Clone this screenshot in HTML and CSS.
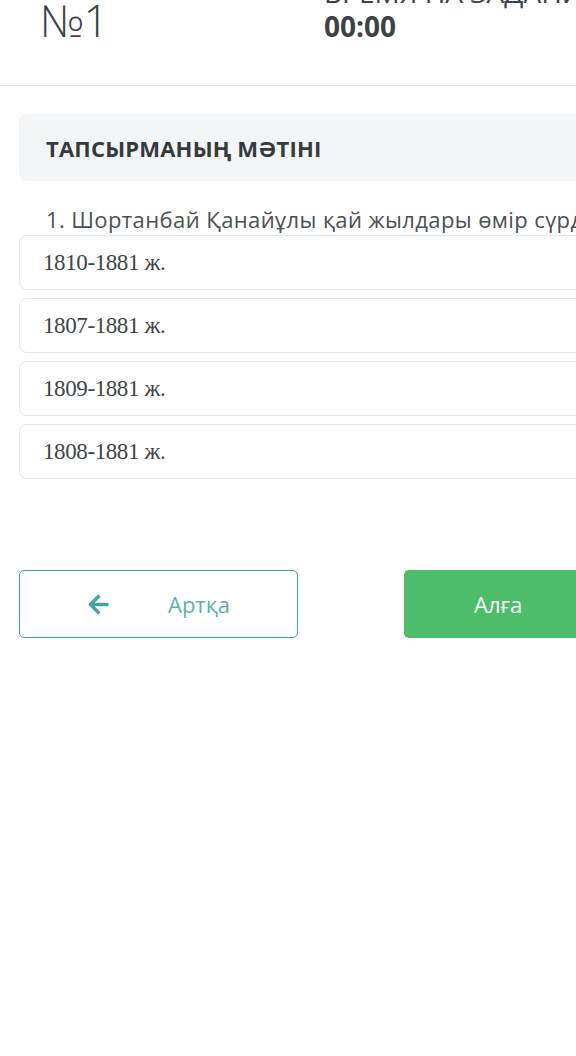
FILE: index.html
```html
<!DOCTYPE html>
<html lang="kk">
<head>
    <meta charset="UTF-8">
    <meta name="viewport" content="width=device-width, initial-scale=1.0">
    <title>Тапсырма</title>
    <link rel="stylesheet" href="styles.css">
</head>
<body>
    <div class="page">
        <!-- тапсырма нөмірі және уақыт -->
        <div class="top">
            <div class="task-num">№1</div>
            <div class="timer">
                <div class="timer-label">ВРЕМЯ НА ЗАДАНИЕ</div>
                <div class="timer-value">00:00</div>
            </div>
        </div>

        <div class="content">
            <div class="section-title">ТАПСЫРМАНЫҢ МӘТІНІ</div>
            <div class="question">1. Шортанбай Қанайұлы қай жылдары өмір сүрді?</div>

            <div class="answers">
                <div class="answer">1810-1881 ж.</div>
                <div class="answer">1807-1881 ж.</div>
                <div class="answer">1809-1881 ж.</div>
                <div class="answer">1808-1881 ж.</div>
            </div>

            <div class="nav">
                <button class="btn btn-back">
                    <svg class="arrow" viewBox="0 0 448 512" width="23" height="23">
                        <path fill="currentColor" d="M257.5 445.1l-22.2 22.2c-9.4 9.4-24.6 9.4-33.9 0L7 273c-9.4-9.4-9.4-24.6 0-33.9L201.4 44.7c9.4-9.4 24.6-9.4 33.9 0l22.2 22.2c9.5 9.5 9.3 25-.4 34.3L136.6 216H424c13.3 0 24 10.7 24 24v32c0 13.3-10.7 24-24 24H136.6l120.5 114.8c9.8 9.3 10 24.8.4 34.3z"/>
                    </svg>
                    <span>Артқа</span>
                </button>
                <button class="btn btn-next">
                    <span>Алға</span>
                    <svg class="arrow" viewBox="0 0 448 512" width="23" height="23">
                        <path fill="currentColor" d="M190.5 66.9l22.2-22.2c9.4-9.4 24.6-9.4 33.9 0L441 239c9.4 9.4 9.4 24.6 0 33.9L246.6 467.3c-9.4 9.4-24.6 9.4-33.9 0l-22.2-22.2c-9.5-9.5-9.3-25 .4-34.3L311.4 296H24c-13.3 0-24-10.7-24-24v-32c0-13.3 10.7-24 24-24h287.4L190.9 101.2c-9.8-9.3-10-24.8-.4-34.3z"/>
                    </svg>
                </button>
            </div>
        </div>
    </div>
</body>
</html>
```

FILE: styles.css
```css
/* страница шире экрана, правая часть обрезана */
body {
    margin: 0;
    background: #fff;
    font-family: "Open Sans", Arial, sans-serif;
    color: #3a4046;
    overflow-x: hidden;
}

.page {
    width: 780px;
}

/* шапка */
.top {
    display: flex;
    align-items: flex-start;
    height: 85px;
    border-bottom: 1px solid #e6e9eb;
    padding-left: 40px;
}

.task-num {
    font-size: 44px;
    font-weight: 300;
    line-height: 1;
    margin-top: -2px;
    letter-spacing: -1px;
    color: #3c4248;
    width: 284px;
}

.timer {
    margin-top: -24px;
}

.timer-label {
    font-size: 28px;
    line-height: 32px;
    color: #3c4248;
    white-space: nowrap;
}

.timer-value {
    font-size: 28px;
    font-weight: 700;
    line-height: 36px;
    color: #3c4248;
}

.content {
    padding: 28px 0 0 19px;
}

/* заголовок раздела */
.section-title {
    background: #f3f5f7;
    border-radius: 8px;
    height: 67px;
    display: flex;
    align-items: center;
    padding-left: 27px;
    font-size: 22px;
    font-weight: 700;
    letter-spacing: 0.2px;
    color: #343a40;
}

.question {
    margin: 23px 0 0 27px;
    font-size: 22px;
    letter-spacing: 0.4px;
    line-height: 30px;
    color: #4a5056;
    white-space: nowrap;
}

.answers {
    display: flex;
    flex-direction: column;
    gap: 8px;
    margin-top: 1px;
}

.answer {
    height: 53px;
    border: 1px solid #e2e7ea;
    border-radius: 8px;
    display: flex;
    align-items: center;
    padding-left: 23px;
    font-family: "Liberation Serif", "Times New Roman", serif;
    font-size: 23px;
    letter-spacing: -0.4px;
    color: #3f4448;
}

/* кнопки */
.nav {
    display: flex;
    gap: 106px;
    margin-top: 91px;
}

.btn {
    width: 279px;
    height: 68px;
    border-radius: 5px;
    font-family: "Open Sans", Arial, sans-serif;
    font-size: 22px;
    cursor: pointer;
    display: flex;
    align-items: center;
}

.btn-back {
    background: #fff;
    border: 1px solid #3aa7a5;
    color: #5ab2b0;
    padding-left: 67px;
}

.btn-back .arrow {
    color: #45a5a5;
    margin-right: 58px;
}

.btn-next {
    background: #4cbd69;
    border: none;
    color: #fff;
    padding-left: 70px;
}

.btn-next .arrow {
    margin-left: 58px;
}
```
